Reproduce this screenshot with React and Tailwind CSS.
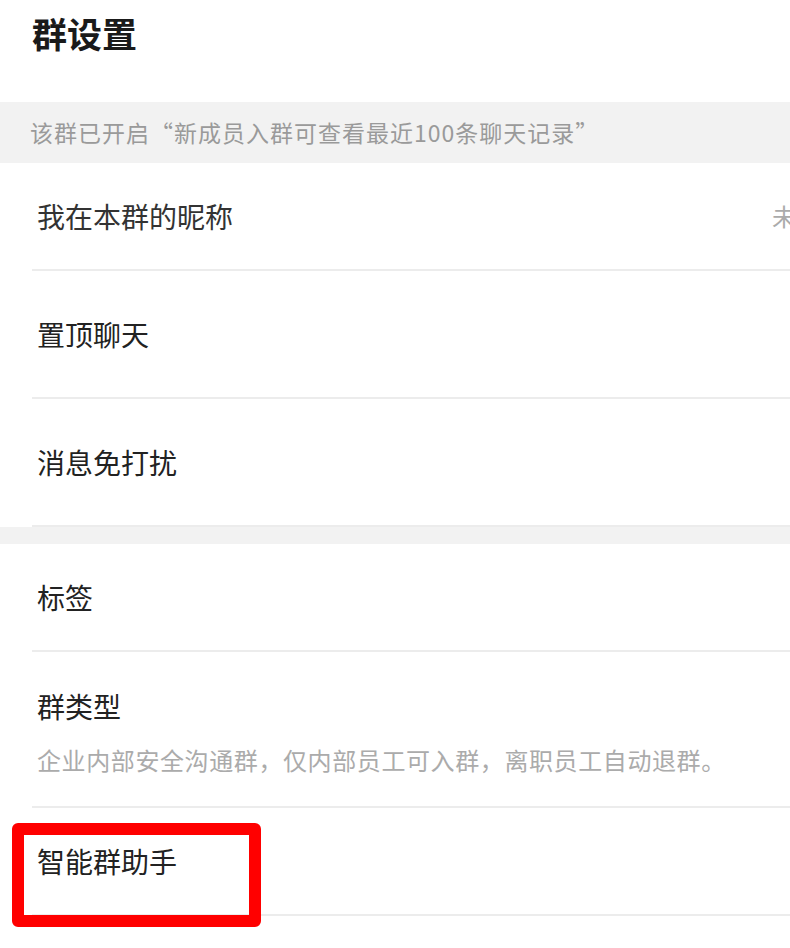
import React from "react";

function Row({ h, children, className = "" }) {
  return (
    <div className={`relative bg-white overflow-hidden ${className}`}>
      <div className={`ml-[32px] pl-[5px] border-b-2 border-[#ececec] flex items-center ${h}`}>
        {children}
      </div>
    </div>
  );
}

export default function App() {
  return (
    <div
      className="w-[790px] min-h-[948px] bg-white overflow-hidden"
      style={{ fontFamily: '"Noto Sans CJK SC", "Noto Sans", sans-serif' }}
    >
      <div className="h-[64px] flex items-center pl-[32px]">
        <span className="text-[35px] leading-[35px] font-bold text-[#1a1a1a]">群设置</span>
      </div>
      <div className="h-[38px]" />
      <div className="h-[61px] bg-[#f2f2f2] flex items-center pl-[30px]">
        <span className="text-[23px] leading-[23px] tracking-[1px] text-[#9a9a9a] whitespace-nowrap">
          该群已开启“新成员入群可查看最近100条聊天记录”
        </span>
      </div>

      <Row h="h-[108px]">
        <span className="text-[28px] leading-[28px] text-[#333] whitespace-nowrap">我在本群的昵称</span>
        <span className="flex-1" />
        <span className="shrink-0 -mr-[54px] text-[24px] leading-[24px] text-[#ababab] whitespace-nowrap">未设置</span>
      </Row>
      <Row h="h-[128px]">
        <span className="text-[28px] leading-[28px] text-[#222]">置顶聊天</span>
      </Row>
      <Row h="h-[128px]">
        <span className="text-[28px] leading-[28px] text-[#222]">消息免打扰</span>
      </Row>

      <div className="h-[17px] bg-[#f2f2f2]" />

      <Row h="h-[108px]">
        <span className="text-[28px] leading-[28px] text-[#222]">标签</span>
      </Row>

      <div className="bg-white">
        <div className="ml-[32px] pl-[5px] border-b-2 border-[#ececec] h-[156px] flex flex-col pt-[40px]">
          <span className="text-[28px] leading-[28px] text-[#222]">群类型</span>
          <span className="mt-[28px] text-[24px] leading-[24px] tracking-[0.6px] text-[#ababab] whitespace-nowrap">
            企业内部安全沟通群，仅内部员工可入群，离职员工自动退群。
          </span>
        </div>
      </div>

      <div className="relative bg-white">
        <div className="ml-[32px] pl-[5px] border-b-2 border-[#ececec] h-[108px] flex items-center">
          <span className="text-[28px] leading-[28px] text-[#222]">智能群助手</span>
        </div>
        <div className="absolute left-[12px] top-[15px] w-[249px] h-[104px] border-[12px] border-[#ff0000] rounded-[6px]" />
      </div>
    </div>
  );
}
